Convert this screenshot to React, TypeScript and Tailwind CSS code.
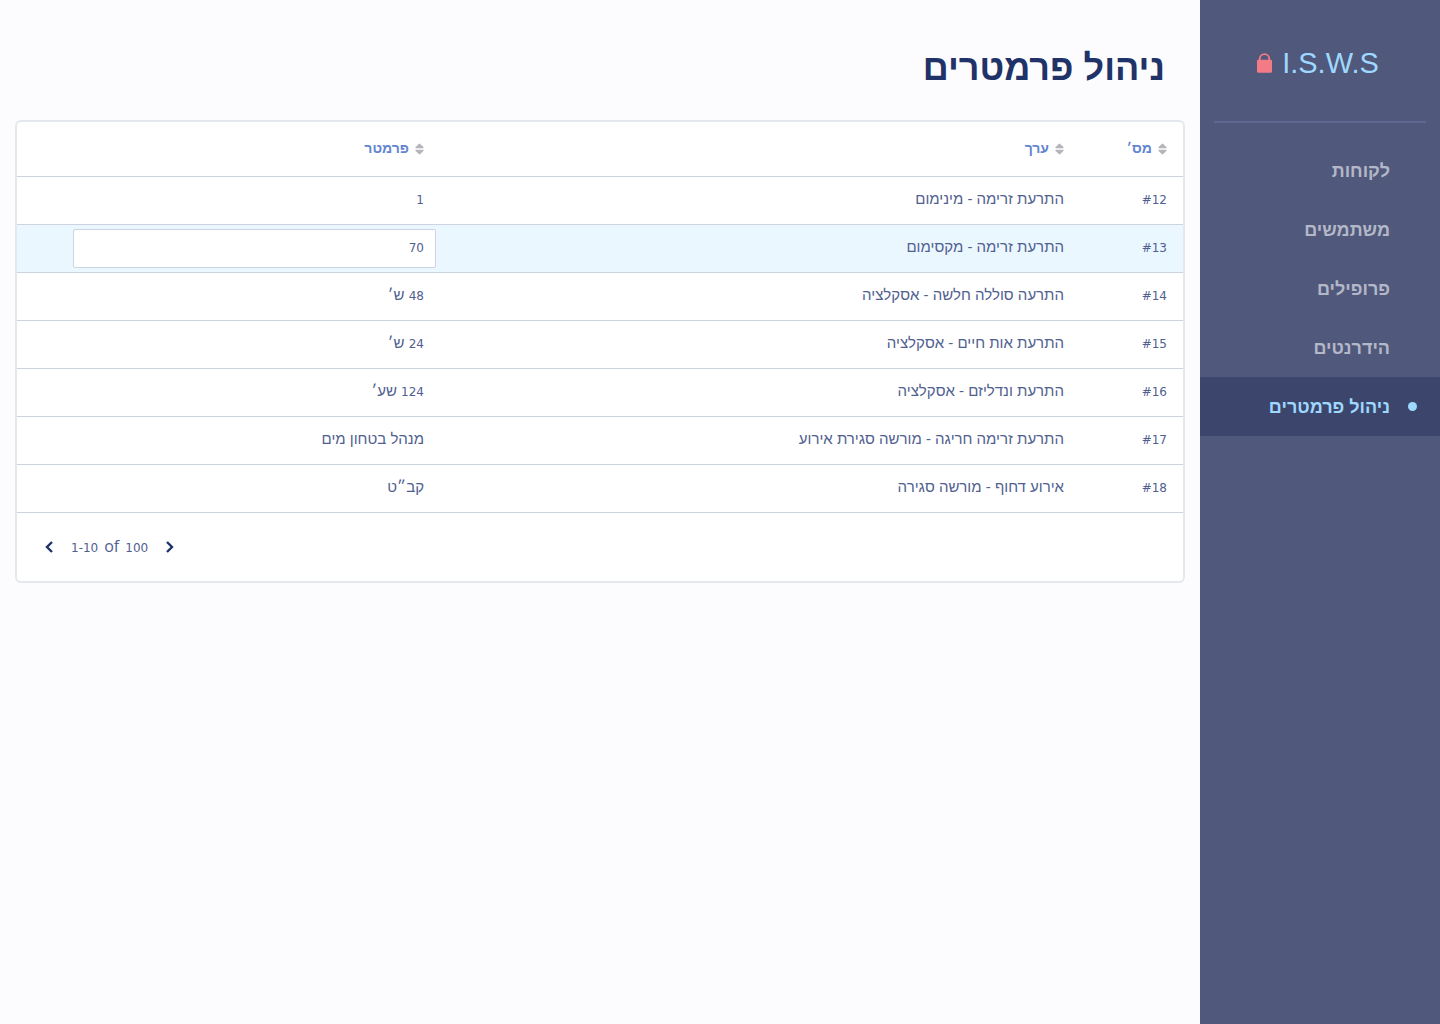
import { useState } from "react";

const navItems = ["לקוחות", "משתמשים", "פרופילים", "הידרנטים", "ניהול פרמטרים"];

type Row = { id: string; name: string; amount?: string; unit?: string; editing?: boolean };

const rows: Row[] = [
  { id: "#12", name: "התרעת זרימה - מינימום", amount: "1" },
  { id: "#13", name: "התרעת זרימה - מקסימום", amount: "70", editing: true },
  { id: "#14", name: "התרעה סוללה חלשה - אסקלציה", amount: "48", unit: "ש׳" },
  { id: "#15", name: "התרעת אות חיים - אסקלציה", amount: "24", unit: "ש׳" },
  { id: "#16", name: "התרעת ונדליזם - אסקלציה", amount: "124", unit: "שע׳" },
  { id: "#17", name: "התרעת זרימה חריגה - מורשה סגירת אירוע", unit: "מנהל בטחון מים" },
  { id: "#18", name: "אירוע דחוף - מורשה סגירה", unit: "קב״ט" },
];

function LockIcon() {
  return (
    <svg width="15" height="20" viewBox="0 0 15 20" fill="none" aria-hidden="true">
      <path d="M2.700 8V6a4.800 4.800 0 0 1 9.600 0V8" stroke="#f37b86" strokeWidth="1.800" />
      <rect y="6.800" width="15" height="13" rx="1.300" fill="#f37b86" />
    </svg>
  );
}

function SortIcon() {
  return (
    <svg width="9" height="12" viewBox="0 0 9 12" fill="#b5b5ba" aria-hidden="true">
      <path d="M3.800.9a.9.9 0 0 1 1.400 0l3.200 3.100c.5.600.2 1.300-.500 1.300H1.100C.4 5.300.1 4.600.6 4z" />
      <path d="M3.800 11.100a.9.9 0 0 0 1.400 0l3.200-3.100c.5-.600.2-1.300-.500-1.300H1.100c-.7 0-1 .7-.5 1.300z" />
    </svg>
  );
}

function Chevron({ flip }: { flip?: boolean }) {
  return (
    <svg width="8" height="12" viewBox="0 0 8 12" fill="none" stroke="#1f3369" strokeWidth="2.400" aria-hidden="true">
      <path d={flip ? "M7 1L2 6l5 5" : "M1 1l5 5-5 5"} />
    </svg>
  );
}

function HeadCell({ label }: { label: string }) {
  return (
    <th scope="col" className="h-[54px] p-0 ps-4 text-start">
      <button type="button" className="flex items-center gap-1.5 text-[14px] font-bold text-[#6285d0]">
        <SortIcon />
        {label}
      </button>
    </th>
  );
}

export default function App() {
  const [active, setActive] = useState(4);
  const [value, setValue] = useState("70");

  return (
    <div dir="rtl" className="flex min-h-screen bg-[#fcfcfe] font-['Liberation_Sans',sans-serif] text-[#50608f]">
      <aside className="w-60 shrink-0 bg-[#50597b]">
        <div className="mx-3.5 flex h-[123px] items-center justify-center gap-2.5 border-b-2 border-[#5e6890] ps-1 pt-1">
          <span dir="ltr" className="text-[29px] leading-9 text-[#9fd8ff]">
            I.S.W.S
          </span>
          <LockIcon />
        </div>
        <nav className="pt-[18px]">
          {navItems.map((item, i) => (
            <a
              key={item}
              href="#"
              onClick={(e) => {
                e.preventDefault();
                setActive(i);
              }}
              aria-current={i === active ? "page" : undefined}
              className={
                i === active
                  ? "flex h-[59px] items-center bg-[#3c466c] ps-[23px] text-lg font-bold text-[#9fd8ff]"
                  : "flex h-[59px] items-center ps-[50px] text-lg font-bold text-[#b3b7c8]"
              }
            >
              {i === active && <span className="me-[18px] size-[9px] rounded-full bg-[#9fd8ff]" />}
              {item}
            </a>
          ))}
        </nav>
      </aside>

      <main className="min-w-0 flex-1 px-[15px]">
        <h1 className="px-5 pt-10 pb-6 text-[36px] leading-14 font-bold text-[#1f3369]">ניהול פרמטרים</h1>

        <section className="rounded-md border-2 border-[#e5e7ef] bg-white">
          <table className="w-full table-fixed border-collapse">
            <colgroup>
              <col className="w-[103px]" />
              <col />
              <col className="w-[423px]" />
            </colgroup>
            <thead>
              <tr className="border-b border-[#cdd3e0]">
                <HeadCell label="מס׳" />
                <HeadCell label="ערך" />
                <HeadCell label="פרמטר" />
              </tr>
            </thead>
            <tbody className="text-[15px] leading-5">
              {rows.map((row) => (
                <tr key={row.id} className={row.editing ? "h-12 border-b border-[#cdd3e0] bg-[#ebf7ff]" : "h-12 border-b border-[#cdd3e0]"}>
                  <td className="p-0 ps-4 font-['DejaVu_Sans',sans-serif] text-xs">
                    <bdi dir="ltr">{row.id}</bdi>
                  </td>
                  <td className="p-0 ps-4 pb-0.5">{row.name}</td>
                  <td className={row.editing ? "p-0 ps-1 pe-14" : "p-0 ps-4 pb-0.5"}>
                    {row.editing ? (
                      <input
                        aria-label={row.name}
                        value={value}
                        onChange={(e) => setValue(e.target.value)}
                        className="block h-[39px] w-full rounded-xs border border-[#cdd3e0] bg-white px-[11px] font-['DejaVu_Sans',sans-serif] text-xs outline-none"
                      />
                    ) : (
                      <>
                        {row.amount && <span className="font-['DejaVu_Sans',sans-serif] text-xs">{row.amount}</span>}
                        {row.amount && row.unit && " "}
                        {row.unit}
                      </>
                    )}
                  </td>
                </tr>
              ))}
            </tbody>
          </table>

          <div dir="ltr" className="flex h-[68px] items-center gap-[18px] px-7">
            <button type="button" aria-label="Previous page">
              <Chevron flip />
            </button>
            <p className="flex items-baseline gap-1.5 pb-0.5 font-['Open_Sans',sans-serif] text-base">
              <span className="font-['DejaVu_Sans',sans-serif] text-xs">1-10</span>
              <span>of</span>
              <span className="font-['DejaVu_Sans',sans-serif] text-xs">100</span>
            </p>
            <button type="button" aria-label="Next page">
              <Chevron />
            </button>
          </div>
        </section>
      </main>
    </div>
  );
}
